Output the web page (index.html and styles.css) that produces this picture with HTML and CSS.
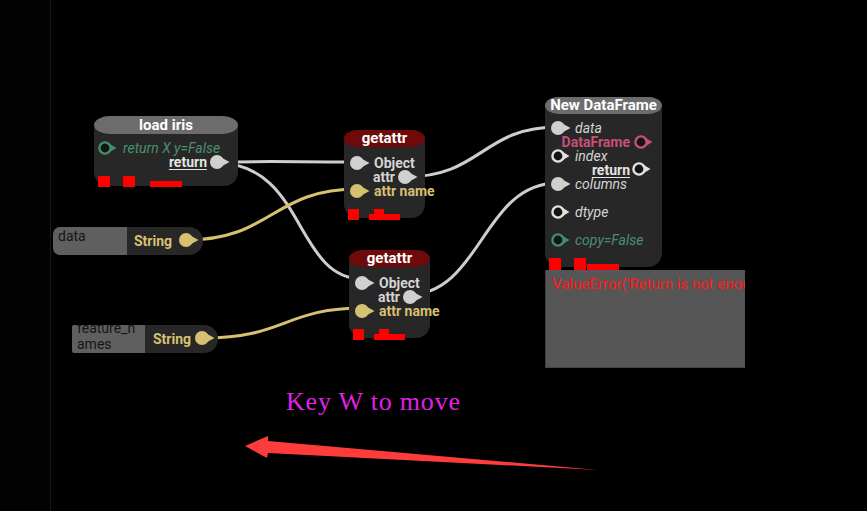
FILE: index.html
```html
<!DOCTYPE html>
<html>
<head>
<meta charset="utf-8">
<link rel="stylesheet" href="styles.css">
</head>
<body>
<div class="app">
  <div class="side"></div>
  <div class="canvas">
    <svg class="wires" width="816" height="511" viewBox="51 0 816 511">
      <path class="w grey" d="M217 162 C 287 161 287 162 357 162"/>
      <path class="w grey" d="M217 163 C 305 163 295 279 362 279"/>
      <path class="w yel" d="M186 240 C 272 240 272 189 358 189"/>
      <path class="w yel" d="M204 338 C 285 338 285 308 363 308"/>
      <path class="w grey" d="M405 177 C 482 177 482 127 558 127"/>
      <path class="w grey" d="M407 295 C 482 295 482 183 558 183"/>
      <polygon class="arrow" points="245,446 268,436 268,441 598,470 268,453 267,458"/>
    </svg>

    <div class="node n-load">
      <div class="head h-grey">load iris</div>
      <div class="rows">
        <div class="row in">
          <svg class="port pin" width="22" height="16" viewBox="0 0 22 16"><polygon points="12,3.5 19.5,8 12,12.5" fill="#3f8f6c"/><circle cx="8" cy="8" r="5.6" fill="#141414" stroke="#3f8f6c" stroke-width="2.4"/></svg>
          <span class="lbl it green">return X y=False</span>
        </div>
        <div class="row out">
          <span class="lbl ret">return</span>
          <svg class="port pout" width="22" height="16" viewBox="0 0 22 16"><circle cx="8" cy="8" r="7" fill="#d0d0d0"/><polygon points="10,2.2 20.5,8 10,13.8" fill="#d0d0d0"/></svg>
        </div>
      </div>
      <div class="marks">
        <div class="sq"></div>
        <div class="sq"></div>
        <div class="bar"></div>
      </div>
    </div>

    <div class="node n-get n-get1">
      <div class="head h-red">getattr</div>
      <div class="rows">
        <div class="row in">
          <svg class="port pin" width="22" height="16" viewBox="0 0 22 16"><circle cx="8" cy="8" r="7" fill="#d0d0d0"/><polygon points="10,2.2 20.5,8 10,13.8" fill="#d0d0d0"/></svg>
          <span class="lbl b lt">Object</span>
        </div>
        <div class="row out">
          <span class="lbl b lt">attr</span>
          <svg class="port pout" width="22" height="16" viewBox="0 0 22 16"><circle cx="8" cy="8" r="7" fill="#d0d0d0"/><polygon points="10,2.2 20.5,8 10,13.8" fill="#d0d0d0"/></svg>
        </div>
        <div class="row in">
          <svg class="port pin" width="22" height="16" viewBox="0 0 22 16"><circle cx="8" cy="8" r="7" fill="#d6c170"/><polygon points="10,2.2 20.5,8 10,13.8" fill="#d6c170"/></svg>
          <span class="lbl b yel">attr name</span>
        </div>
      </div>
      <div class="marks">
        <div class="sq"></div>
        <div class="stack"><div class="bump"></div><div class="bar"></div></div>
      </div>
    </div>

    <div class="node n-get n-get2">
      <div class="head h-red">getattr</div>
      <div class="rows">
        <div class="row in">
          <svg class="port pin" width="22" height="16" viewBox="0 0 22 16"><circle cx="8" cy="8" r="7" fill="#d0d0d0"/><polygon points="10,2.2 20.5,8 10,13.8" fill="#d0d0d0"/></svg>
          <span class="lbl b lt">Object</span>
        </div>
        <div class="row out">
          <span class="lbl b lt">attr</span>
          <svg class="port pout" width="22" height="16" viewBox="0 0 22 16"><circle cx="8" cy="8" r="7" fill="#d0d0d0"/><polygon points="10,2.2 20.5,8 10,13.8" fill="#d0d0d0"/></svg>
        </div>
        <div class="row in">
          <svg class="port pin" width="22" height="16" viewBox="0 0 22 16"><circle cx="8" cy="8" r="7" fill="#d6c170"/><polygon points="10,2.2 20.5,8 10,13.8" fill="#d6c170"/></svg>
          <span class="lbl b yel">attr name</span>
        </div>
      </div>
      <div class="marks">
        <div class="sq"></div>
        <div class="stack"><div class="bump"></div><div class="bar"></div></div>
      </div>
    </div>

    <div class="node n-df">
      <div class="head h-grey">New DataFrame</div>
      <div class="rows">
        <div class="row in">
          <svg class="port pin" width="22" height="16" viewBox="0 0 22 16"><circle cx="8" cy="8" r="7" fill="#d0d0d0"/><polygon points="10,2.2 20.5,8 10,13.8" fill="#d0d0d0"/></svg>
          <span class="lbl it lt">data</span>
        </div>
        <div class="row out">
          <span class="lbl b pink">DataFrame</span>
          <svg class="port pout" width="22" height="16" viewBox="0 0 22 16"><polygon points="12,3.5 19.5,8 12,12.5" fill="#c84f79"/><circle cx="8" cy="8" r="5.6" fill="#141414" stroke="#c84f79" stroke-width="2.4"/></svg>
        </div>
        <div class="row in">
          <svg class="port pin" width="22" height="16" viewBox="0 0 22 16"><polygon points="12,3.5 19.5,8 12,12.5" fill="#e2e2e2"/><circle cx="8" cy="8" r="5.6" fill="#141414" stroke="#e2e2e2" stroke-width="2.4"/></svg>
          <span class="lbl it lt">index</span>
        </div>
        <div class="row out">
          <span class="lbl ret">return</span>
          <svg class="port pout pret" width="22" height="16" viewBox="0 0 22 16"><polygon points="12,3.5 19.5,8 12,12.5" fill="#e2e2e2"/><circle cx="8" cy="8" r="5.6" fill="#141414" stroke="#e2e2e2" stroke-width="2.4"/></svg>
        </div>
        <div class="row in">
          <svg class="port pin" width="22" height="16" viewBox="0 0 22 16"><circle cx="8" cy="8" r="7" fill="#d0d0d0"/><polygon points="10,2.2 20.5,8 10,13.8" fill="#d0d0d0"/></svg>
          <span class="lbl it lt">columns</span>
        </div>
        <div class="row in spaced">
          <svg class="port pin" width="22" height="16" viewBox="0 0 22 16"><polygon points="12,3.5 19.5,8 12,12.5" fill="#e2e2e2"/><circle cx="8" cy="8" r="5.6" fill="#141414" stroke="#e2e2e2" stroke-width="2.4"/></svg>
          <span class="lbl it lt">dtype</span>
        </div>
        <div class="row in spaced">
          <svg class="port pin" width="22" height="16" viewBox="0 0 22 16"><polygon points="12,3.5 19.5,8 12,12.5" fill="#3f8f6c"/><circle cx="8" cy="8" r="5.6" fill="#141414" stroke="#3f8f6c" stroke-width="2.4"/></svg>
          <span class="lbl it green">copy=False</span>
        </div>
      </div>
      <div class="marks">
        <div class="sq"></div>
        <div class="sq"></div>
        <div class="bar"></div>
      </div>
    </div>

    <div class="errbox">ValueError('Return is not enough values to unpack')</div>

    <div class="strnode s1">
      <div class="tbox"><div class="ttext">data</div></div>
      <div class="sbody">
        <span class="lbl b yel">String</span>
        <svg class="port sport" width="22" height="16" viewBox="0 0 22 16"><circle cx="8" cy="8" r="7" fill="#d6c170"/><polygon points="10,2.2 20.5,8 10,13.8" fill="#d6c170"/></svg>
      </div>
    </div>

    <div class="strnode s2">
      <div class="tbox"><div class="ttext">feature_n<br>ames</div></div>
      <div class="sbody">
        <span class="lbl b yel">String</span>
        <svg class="port sport" width="22" height="16" viewBox="0 0 22 16"><circle cx="8" cy="8" r="7" fill="#d6c170"/><polygon points="10,2.2 20.5,8 10,13.8" fill="#d6c170"/></svg>
      </div>
    </div>

    <div class="hint">Key W to move</div>
  </div>
</div>
</body>
</html>
```

FILE: styles.css
```css
* { box-sizing: border-box; }
html, body { margin: 0; padding: 0; background: #000; }
body { font-family: Roboto, "Liberation Sans", sans-serif; }

.app {
  display: flex;
  width: 867px;
  height: 511px;
  overflow: hidden;
  background: #000;
}
.side {
  width: 51px;
  flex: none;
  border-right: 1px solid #161616;
  background: #020202;
}
.canvas {
  position: relative;
  flex: 1;
  height: 511px;
  overflow: hidden;
}

.wires { position: absolute; left: 0; top: 0; }
.w { fill: none; stroke-width: 3; stroke-linecap: round; }
.w.grey { stroke: #cdcdcd; }
.w.yel { stroke: #d6c170; }
.arrow { fill: #ff3c3c; }

/* nodes on the free canvas */
.node {
  position: absolute;
  background: #272727;
  border-radius: 14px;
  color: #d8d8d8;
}
.n-load { left: 43px; top: 116px; width: 144px; height: 70px;
  --in-pad: 29px; --port-in: 3px; --out-pad: 31px; --port-out: 115px; }
.n-get { width: 81px; height: 88px;
  --in-pad: 30px; --port-in: 5px; --out-pad: 30px; --port-out: 53px; }
.n-get1 { left: 293px; top: 130px; }
.n-get2 { left: 298px; top: 250px; }
.n-df { left: 494px; top: 97px; width: 117px; height: 170px;
  --in-pad: 30px; --port-in: 5px; --out-pad: 32px; --port-out: 88px; }

.head {
  height: 17px;
  line-height: 17px;
  text-align: center;
  color: #fff;
  font-weight: 700;
  font-size: 15px;
  border-radius: 14px / 8.5px;
  white-space: nowrap;
}
.n-load .head { height: 18px; line-height: 18px; border-radius: 16px / 9px; }
.h-grey { background: #6c6c6c; }
.h-red { background: #6e0a0a; }

.rows { padding-top: 7px; }
.n-get .rows { padding-top: 9px; }
.row {
  position: relative;
  display: flex;
  height: 14px;
  line-height: 14px;
  font-size: 14px;
  white-space: nowrap;
}
.row.in { padding-left: var(--in-pad); }
.row.out { justify-content: flex-end; padding-right: var(--out-pad); }
.row.spaced { margin-top: 14px; }

.port { position: absolute; top: -1px; }
.pin { left: var(--port-in); }
.pout { left: var(--port-out); }
.pret { left: 86px; top: -2px; }

.lbl { display: block; }
.it { font-style: italic; }
.b { font-weight: 700; }
.lt { color: #d4d4d4; }
.green { color: #4a8f6f; }
.yel { color: #d6c170; }
.pink { color: #c84f79; }
.ret { font-weight: 700; color: #e4e4e4; text-decoration: underline; text-underline-offset: 2px; }

/* red status markers */
.marks {
  display: flex;
  align-items: flex-end;
  padding-left: 4px;
}
.n-load .marks { margin-top: 7px; }
.n-get .marks { margin-top: 11px; gap: 10px; }
.n-df .marks { margin-top: 11px; }
.sq { width: 12px; height: 11px; background: #ff0000; }
.bar { width: 32px; height: 6px; background: #ff0000; }
.n-load .sq + .sq { margin-left: 13px; }
.n-load .bar { margin-left: 15px; }
.n-df .sq { height: 12px; }
.n-df .sq + .sq { margin-left: 13px; }
.n-df .bar { margin-left: 1px; }
.n-get .sq { width: 11px; }
.stack { display: flex; flex-direction: column; }
.bump { width: 10px; height: 5px; margin-left: 5px; background: #ff0000; }
.n-get .bar { width: 31px; }

.errbox {
  position: absolute;
  left: 494px; top: 270px;
  width: 200px; height: 98px;
  background: #565656;
  border-left: 1px solid #3e3e3e;
  border-bottom: 1px solid #444;
  color: #ff1a1a;
  font-size: 15px;
  line-height: 16px;
  padding: 6px 0 0 6px;
  white-space: nowrap;
  overflow: hidden;
}

/* string input nodes */
.strnode { position: absolute; display: flex; }
.s1 { left: 2px; top: 227px; height: 28px; }
.s2 { left: 21px; top: 325px; height: 28px; }
.tbox {
  width: 74px;
  background: #5f5f5f;
  border-radius: 7px 0 0 7px;
  overflow: hidden;
  color: #151515;
  font-size: 14px;
  line-height: 16px;
  padding: 1px 5px 0;
}
.s2 .tbox { width: 73px; border-radius: 2px 0 0 2px; }
.s2 .ttext { margin-top: -6px; }
.sbody {
  position: relative;
  width: 76px;
  background: #272727;
  border-radius: 0 14px 14px 0;
  display: flex;
  align-items: center;
  padding-left: 7px;
  font-size: 14px;
}
.s2 .sbody { width: 73px; padding-left: 8px; }
.sport { left: 51px; top: 5px; }
.s2 .sport { left: 49px; top: 5px; }

.hint {
  position: absolute;
  left: 235px; top: 389px;
  font-family: "Liberation Serif", serif;
  font-size: 26px;
  line-height: 26px;
  letter-spacing: 0.8px;
  color: #e020e6;
  white-space: nowrap;
}
```
